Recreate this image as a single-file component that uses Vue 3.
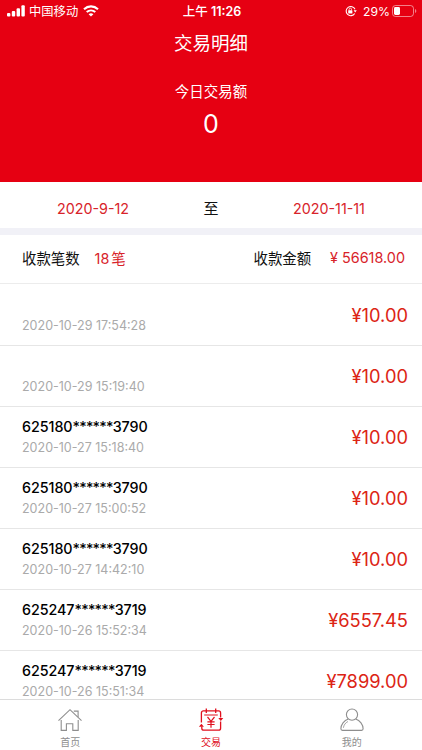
<script setup>
import {ref} from 'vue';

const active = ref('trade');

const list = ref([
  {start: '', end: '', time: '2020-10-29 17:54:28', money: '10.00'},
  {start: '', end: '', time: '2020-10-29 15:19:40', money: '10.00'},
  {start: '625180', end: '3790', time: '2020-10-27 15:18:40', money: '10.00'},
  {start: '625180', end: '3790', time: '2020-10-27 15:00:52', money: '10.00'},
  {start: '625180', end: '3790', time: '2020-10-27 14:42:10', money: '10.00'},
  {start: '625247', end: '3719', time: '2020-10-26 15:52:34', money: '6557.45'},
  {start: '625247', end: '3719', time: '2020-10-26 15:51:34', money: '7899.00'},
]);
</script>

<template>
  <div class="page">
    <header class="header">
      <div class="status">
        <div class="status__side">
          <svg class="signal" width="18" height="12" viewBox="0 0 18 12" fill="#fff">
            <rect x="0" y="8" width="3.4" height="3.5" rx="1"/>
            <rect x="4.8" y="6" width="3.4" height="5.5" rx="1"/>
            <rect x="9.6" y="3.3" width="3.4" height="8.2" rx="1"/>
            <rect x="14.4" y="0.3" width="3.4" height="11.2" rx="1"/>
          </svg>
          <span class="carrier">中国移动</span>
          <svg class="wifi" width="16" height="12" viewBox="0 0 16 12" fill="none" stroke="#fff">
            <path d="M1 4.2C5 .4 11 .4 15 4.2" stroke-width="2.1"/>
            <path d="M3.7 7.1c2.5-2.3 6.1-2.3 8.6 0" stroke-width="2"/>
            <path d="M8 11.6L5.6 9.2c1.4-1.2 3.4-1.2 4.8 0z" fill="#fff" stroke="none"/>
          </svg>
        </div>
        <div class="status__time"><span class="cn">上午</span> 11:26</div>
        <div class="status__side right">
          <svg class="lock" width="12" height="12" viewBox="0 0 12 12" fill="none" stroke="#fff">
            <path d="M9.7 8.5A4.6 4.6 0 1 1 10 4.3" stroke-width="1.1"/>
            <path d="M8.6 5.2h3.2L10.2 7.6z" fill="#fff" stroke="none"/>
            <rect x="3.2" y="5.2" width="4.2" height="3.2" rx=".5" fill="#fff" stroke="none"/>
            <path d="M4.1 5.4V4.3a1.2 1.2 0 0 1 2.4 0v1.1" stroke-width=".8"/>
          </svg>
          <span class="percent">29%</span>
          <svg width="25" height="12" viewBox="0 0 25 12">
            <rect x=".5" y=".5" width="21" height="11" rx="3" fill="none" stroke="#fff" stroke-opacity=".5"/>
            <rect x="2" y="2" width="6" height="8" rx="1.4" fill="#fff"/>
            <path d="M23 4v4c1.8-.6 1.8-3.4 0-4z" fill="#fff" fill-opacity=".5"/>
          </svg>
        </div>
      </div>
      <h1 class="title">交易明细</h1>
      <div class="today">今日交易额</div>
      <div class="today__num">0</div>
    </header>

    <div class="dates">
      <span class="date">2020-9-12</span>
      <span class="to">至</span>
      <span class="date">2020-11-11</span>
    </div>

    <div class="summary">
      <div class="summary__item">
        收款笔数
        <span class="count">18<i>笔</i></span>
      </div>
      <div class="summary__item">
        收款金额
        <span class="total">¥ 56618.00</span>
      </div>
    </div>

    <main class="list">
      <div v-for="item in list" :key="item.time" class="row">
        <div>
          <div class="card">
            <template v-if="item.start">{{ item.start }}<span class="mask">******</span>{{ item.end }}</template>
          </div>
          <div class="time">{{ item.time }}</div>
        </div>
        <div class="money">¥{{ item.money }}</div>
      </div>
    </main>

    <nav class="tabbar">
      <div class="tab" :class="{active: active === 'home'}" @click="active = 'home'">
        <svg width="26" height="24" viewBox="0 0 26 24" fill="none" stroke="currentColor" stroke-width="1.1">
          <path d="M1.5 12.7L13 1.7l11.5 11"/>
          <path d="M16.8 3.1h4.3v6"/>
          <path d="M4.2 12v10.4h5.2v-6.6h6.4v6.6h5.4V12"/>
        </svg>
        <span>首页</span>
      </div>
      <div class="tab" :class="{active: active === 'trade'}" @click="active = 'trade'">
        <svg width="26" height="24" viewBox="0 0 26 24" fill="none" stroke="currentColor" stroke-width="1.3">
          <path d="M3.4 14.5V4.9a2 2 0 0 1 2-2h15.2a2 2 0 0 1 2 2V9.5"/>
          <path d="M3.8 18.5v1.7a2 2 0 0 0 2 2h14.8a2 2 0 0 0 2-2V13.5"/>
          <path d="M8.3 .5v4.6M17.7 .5v4.6"/>
          <path d="M6.2 7h13.6" stroke-width="1"/>
          <path d="M20.3 10h5l-2.5 2.9zM.9 18.7h5l-2.5-2.9z" fill="currentColor" stroke="none"/>
          <path d="M9.5 9l3.5 4.3L16.5 9M13 13.3v6.5M9.4 13.8h7.2M9.4 16.5h7.2" stroke-width="1.2"/>
        </svg>
        <span>交易</span>
      </div>
      <div class="tab" :class="{active: active === 'mine'}" @click="active = 'mine'">
        <svg width="26" height="24" viewBox="0 0 26 24" fill="none" stroke="currentColor" stroke-width="1.1">
          <circle cx="13" cy="6.6" r="5.6"/>
          <path d="M9.3 11C5 12.4 1.9 16.6 1.9 20.8c0 .9.6 1.6 1.5 1.6h19.2c.9 0 1.5-.7 1.5-1.6 0-4.2-3.1-8.4-7.4-9.8"/>
          <path d="M4.4 19.8c.4-2.8 2.1-5.1 4.6-6.3" stroke-width=".8"/>
        </svg>
        <span>我的</span>
      </div>
    </nav>
  </div>
</template>

<style>
body {
  margin: 0;
  background: #fff;
}
</style>

<style scoped>
.page {
  height: 750px;
  display: flex;
  flex-direction: column;
  overflow: hidden;
  font-family: Inter, "Noto Sans CJK SC", sans-serif;
  color: #111;
  background: #fff;
}

.header {
  flex: none;
  height: 182px;
  background: #e60012;
  color: #fff;
  text-align: center;
}

.status {
  display: grid;
  grid-template-columns: 1fr auto 1fr;
  align-items: center;
  height: 22px;
  padding: 0 5px 0 7px;
}

.status__side {
  display: flex;
  align-items: center;
}

.right {
  justify-content: flex-end;
}

.carrier {
  margin: 0 5px 0 4px;
  padding-top: 1px;
  font-size: 12.3px;
  line-height: 21px;
}

.status__time {
  padding-top: 1px;
  font-size: 12.5px;
  line-height: 21px;
  font-weight: 600;
}

.cn {
  font-weight: 500;
}

.lock {
  margin-right: 6px;
}

.percent {
  margin-right: 2px;
  font-size: 12.2px;
}

.title {
  margin: 7px 0 0;
  font-size: 18.5px;
  line-height: 28px;
  font-weight: 400;
}

.today {
  margin-top: 24px;
  font-size: 14.5px;
  line-height: 22px;
}

.today__num {
  margin-top: 6px;
  font-size: 25px;
  line-height: 30px;
}

.dates {
  flex: none;
  height: 46px;
  display: grid;
  grid-template-columns: 186px 50px 186px;
  text-align: center;
}

.date {
  font-size: 14.3px;
  line-height: 53px;
  color: #d8232a;
}

.to {
  font-size: 15px;
  line-height: 54px;
}

.summary {
  flex: none;
  height: 56px;
  box-sizing: border-box;
  border-top: 7px solid #f1f1f7;
  border-bottom: 1px solid #ececec;
  padding: 0 17px 3px 22px;
  display: flex;
  justify-content: space-between;
  align-items: center;
  font-size: 14.4px;
}

.summary__item {
  display: flex;
  align-items: center;
}

.count,
.total {
  color: #d8232a;
  font-size: 14.4px;
}

.count {
  margin-left: 15px;
}

.count i {
  margin-left: 2px;
  font-style: normal;
}

.total {
  margin-left: 19px;
}

.list {
  flex: 1;
  min-height: 0;
  overflow: hidden;
}

.row {
  height: 61px;
  box-sizing: border-box;
  padding: 10px 14px 0 22px;
  display: flex;
  justify-content: space-between;
  border-bottom: 1px solid #e6e6e6;
}

.row:first-child {
  height: 62px;
  padding-top: 11px;
}

.card {
  height: 20px;
  font-size: 14.3px;
  line-height: 20px;
  font-weight: 500;
  letter-spacing: -0.05px;
  color: #000;
}

.mask {
  letter-spacing: -0.75px;
}

.time {
  margin-top: 2px;
  font-size: 12.5px;
  line-height: 18px;
  color: #aaa;
}

.money {
  font-size: 18.3px;
  line-height: 41px;
  font-weight: 400;
  color: #dc2414;
}

.tabbar {
  flex: none;
  height: 51px;
  box-sizing: border-box;
  border-top: 1px solid #dcdcdc;
  display: flex;
  background: #fff;
}

.tab {
  flex: 1;
  padding-top: 8px;
  display: flex;
  flex-direction: column;
  align-items: center;
  color: #8e8e8e;
  font-size: 10px;
  line-height: 14px;
  cursor: pointer;
}

.tab span {
  margin-top: 3px;
}

.tab.active {
  color: #e0101e;
}
</style>
